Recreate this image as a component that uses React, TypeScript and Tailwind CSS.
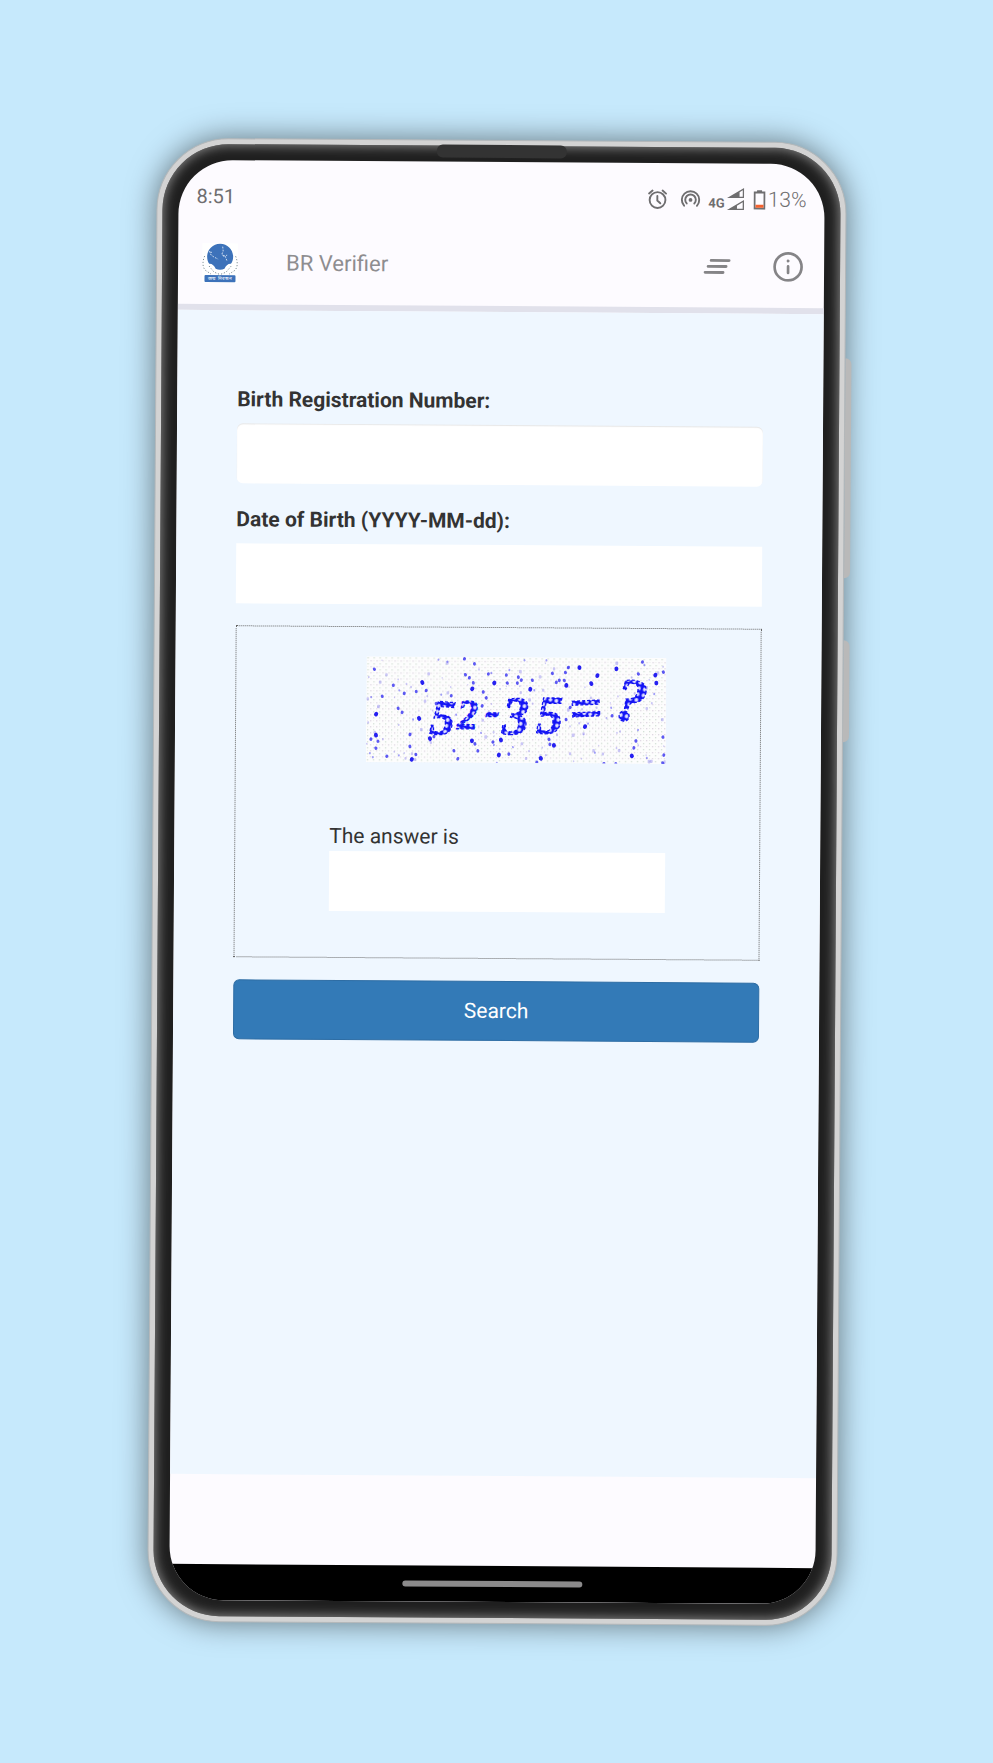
import React from "react";

type Speck = [number, number, number];

// x, y and size of the heavier ink spots on the challenge image
const inkSpots: Speck[] = [
  [8, 13, 3], [27, 29, 3], [33, 34, 2], [38, 37, 3], [50, 35, 3], [56, 26, 4], [60, 34, 3], [16, 40, 3],
  [10, 58, 4], [5, 41, 2], [32, 52, 3], [36, 56, 3], [47, 63, 2], [53, 62, 4], [44, 78, 3], [10, 79, 4],
  [5, 83, 3], [12, 85, 3], [10, 92, 3], [4, 97, 2], [7, 101, 2], [21, 100, 3], [33, 99, 2], [44, 90, 3],
  [46, 103, 4], [50, 98, 3], [64, 82, 4], [68, 80, 3], [88, 94, 3], [92, 102, 3], [106, 84, 4], [109, 87, 3],
  [112, 94, 3], [115, 76, 2], [127, 85, 3], [128, 88, 2], [135, 83, 4], [133, 98, 4], [143, 97, 3], [147, 90, 2],
  [72, 3, 2], [81, 5, 2], [98, 2, 3], [108, 7, 3], [99, 18, 3], [103, 21, 3], [107, 26, 3], [106, 32, 4],
  [122, 17, 3], [125, 16, 2], [128, 26, 4], [140, 18, 3], [141, 26, 3], [143, 13, 2], [152, 20, 3], [155, 23, 3],
  [151, 26, 3], [166, 23, 3], [164, 32, 4], [168, 33, 2], [158, 3, 2], [180, 3, 2], [186, 16, 3], [190, 25, 3],
  [193, 23, 3], [198, 23, 3], [200, 28, 4], [199, 15, 3], [202, 10, 3], [213, 10, 4], [225, 26, 4], [231, 18, 4],
  [250, 11, 4], [272, 16, 3], [276, 4, 3], [278, 7, 2], [289, 17, 4], [290, 25, 4], [297, 14, 3], [288, 36, 2],
  [200, 62, 3], [219, 69, 4], [222, 66, 2], [183, 82, 3], [184, 87, 3], [188, 88, 4], [175, 101, 4], [171, 105, 3],
  [229, 95, 2], [238, 106, 3], [250, 106, 3], [266, 98, 4], [268, 90, 3], [270, 83, 3], [272, 72, 2], [246, 58, 3],
  [297, 79, 3], [298, 97, 3], [281, 100, 2], [297, 105, 3], [117, 35, 3], [120, 41, 3], [116, 49, 3], [85, 39, 3],
  [70, 47, 3], [75, 38, 2], [90, 58, 2], [204, 50, 3], [131, 106, 2], [245, 50, 2],
];

function faintSpots(count: number): Speck[] {
  let seed = 52;
  const next = () => {
    seed = (seed * 16807) % 2147483647;
    return seed / 2147483647;
  };
  return Array.from({ length: count }, () => [next() * 298, next() * 103, 1 + next() * 2]);
}

function Captcha() {
  return (
    <svg viewBox="0 0 300 106" className="w-[300px] max-w-full self-end" role="img" aria-label="52-35=?">
      <defs>
        <pattern id="weave" width="6" height="6" patternUnits="userSpaceOnUse">
          <rect width="6" height="6" fill="#fdfdfd" />
          <rect x="1" y="1" width="1.3" height="1.3" fill="#d3e0d6" />
          <rect x="4" y="4" width="1.3" height="1.3" fill="#dfd6e2" />
          <rect x="1" y="4" width="1" height="1" fill="#ececea" />
        </pattern>
        <pattern id="rings" width="6" height="6" patternUnits="userSpaceOnUse" patternTransform="rotate(12)">
          <rect width="6" height="6" fill="#1414f5" />
          <circle cx="3" cy="3" r="1.900" fill="#e4e4ff" />
        </pattern>
        <clipPath id="edge">
          <rect width="300" height="106" />
        </clipPath>
      </defs>
      <rect width="300" height="106" fill="url(#weave)" />
      <g clipPath="url(#edge)">
        {faintSpots(110).map(([x, y, s], i) => (
          <rect key={i} x={x} y={y} width={s} height={s + 0.6} rx="0.8" fill="#8f86ee" opacity="0.45" />
        ))}
        {inkSpots.map(([x, y, s], i) => (
          <ellipse
            key={i}
            cx={x}
            cy={y}
            rx={s * 0.5}
            ry={s * 0.6}
            fill="#1a14f0"
            opacity={s === 4 ? 0.95 : s === 3 ? 0.7 : 0.4}
            transform={`rotate(${((i * 37) % 60) - 30} ${x} ${y})`}
          />
        ))}
        <text
          fontFamily="'Liberation Serif', serif"
          fontWeight="700"
          fontStyle="italic"
          fill="url(#rings)"
          stroke="#1414f2"
          strokeWidth="1.300"
          strokeDasharray="3 2"
        >
          <tspan x="63" y="77" fontSize="50" rotate="4">5</tspan>
          <tspan x="91" y="72" fontSize="42">2</tspan>
          <tspan x="119" y="68" fontSize="44">-</tspan>
          <tspan x="136" y="77" fontSize="54">3</tspan>
          <tspan x="170" y="76" fontSize="54">5</tspan>
          <tspan x="204" y="71" fontSize="58" rotate="-3">=</tspan>
          <tspan x="247" y="61" fontSize="62" rotate="8">?</tspan>
        </text>
      </g>
    </svg>
  );
}

function Logo() {
  return (
    <svg viewBox="0 0 36 40" className="h-10 w-9 shrink-0" role="img" aria-label="BR Verifier">
      <rect width="36" height="40" fill="#fff" />
      <path
        d="M18 0.5C25.5 0.5 31 6.5 31 13.5C31 16.5 30.2 19 28.8 20.6C26 20.4 23.6 22.5 22.4 25.6C19.6 27 16.4 27 13.6 25.6C12.4 22.5 10 20.4 7.2 20.6C5.8 19 5 16.5 5 13.5C5 6.500 10.500 0.500 18 0.500Z"
        fill="#3d72ba"
      />
      <g fill="none" stroke="#dbe7f5" strokeWidth="0.9" strokeDasharray="1.8 1.2">
        <path d="M7 8L9 12L12 14L16 16" />
        <path d="M20.500 3.500L21 8L19.500 11.500L23 13L25 18" />
        <path d="M8 9L11 9.500" />
        <path d="M21 13L25 12" />
      </g>
      <g fill="none" stroke="#5d6f78" strokeWidth="0.8" strokeDasharray="1.2 1.8">
        <path d="M2.500 13C0.500 18 0 23 3 27L9 31" />
        <path d="M33.500 13C35.500 18 36 23 33 27L27 31" />
        <path d="M7 23L12 29L17 31" />
        <path d="M29 23L24 29L19 31" />
      </g>
      <rect x="2.500" y="32" width="31" height="7" rx="1" fill="#3d72ba" />
      <text
        x="18"
        y="37.200"
        textAnchor="middle"
        fontSize="4.500"
        fontWeight="700"
        fontFamily="'Noto Sans', sans-serif"
        fill="#e6eef8"
      >
        জন্ম নিবন্ধন
      </text>
    </svg>
  );
}

function AlarmIcon() {
  return (
    <svg viewBox="0 0 20 20" className="h-5 w-5" fill="none" stroke="#6f6e70" strokeWidth="1.900" strokeLinecap="round">
      <circle cx="10" cy="11" r="7.900" />
      <path d="M1.500 4.500L5 1.500M18.500 4.500L15 1.500M9.800 7V11.500L12.800 14.200" />
    </svg>
  );
}

function HotspotIcon() {
  return (
    <svg viewBox="0 0 20 20" className="h-5 w-5" fill="none" stroke="#6f6e70" strokeWidth="1.900" strokeLinecap="round">
      <path d="M3.600 16.500A8.700 8.700 0 1 1 16.400 16.500" />
      <path d="M6.200 14.200A5.300 5.300 0 1 1 13.800 14.200" />
      <circle cx="10" cy="10.700" r="1.900" fill="#6f6e70" stroke="none" />
    </svg>
  );
}

function SignalIcon() {
  return (
    <svg viewBox="0 0 18 23" className="h-[23px] w-[18px]" fill="#6f6e70">
      <path d="M0.500 10.500L17.500 0.500V10.500ZM13 4.700V9.200H16.200V2.700Z" fillRule="evenodd" />
      <path d="M0.500 22.500L17.500 12.500V22.500ZM10.500 18.100V21.200H16.200V14.700Z" fillRule="evenodd" />
    </svg>
  );
}

function BatteryIcon() {
  return (
    <svg viewBox="0 0 12 20" className="h-5 w-3">
      <rect x="3.500" y="0.500" width="5" height="2" fill="#6f6e70" />
      <rect x="1" y="2.700" width="10" height="16.200" fill="none" stroke="#6f6e70" strokeWidth="2" />
      <rect x="2" y="15" width="8" height="3" fill="#f4622f" />
    </svg>
  );
}

function StatusBar() {
  return (
    <div className="flex h-[72px] items-center justify-between pr-[18px] pb-px pl-[18px] text-[20px] leading-6 text-[#6f6e70]">
      <span>8:51</span>
      <div className="flex items-center">
        <AlarmIcon />
        <span className="ml-[13px]">
          <HotspotIcon />
        </span>
        <span className="ml-2 self-end text-[13px] leading-4 font-bold">4G</span>
        <span className="ml-[2px]">
          <SignalIcon />
        </span>
        <span className="ml-[9px]">
          <BatteryIcon />
        </span>
        <span className="ml-[2px] text-[21px] font-light">13%</span>
      </div>
    </div>
  );
}

function AppBar() {
  return (
    <header className="flex h-[78px] items-center border-b-[6px] border-[#e1e1eb] pr-[21px] pb-[10px] pl-6">
      <Logo />
      <h1 className="ml-12 flex-1 text-[22px] leading-7 text-[#8e8d90]">BR Verifier</h1>
      <button type="button" aria-label="Menu" className="mr-[42px]">
        <svg viewBox="0 0 28 18" className="h-[18px] w-7" stroke="#858487" strokeWidth="2.800" strokeLinecap="round">
          <path d="M8 3H26M5 9H23M2 15H20" />
        </svg>
      </button>
      <button type="button" aria-label="About">
        <svg viewBox="0 0 30 30" className="h-[30px] w-[30px]" fill="none" stroke="#858487" strokeWidth="2.700" strokeLinecap="round">
          <circle cx="15" cy="15" r="13.500" />
          <path d="M15 14.500V21" />
          <path d="M15 9V9.100" strokeWidth="3" />
        </svg>
      </button>
    </header>
  );
}

function SearchForm() {
  return (
    <form
      className="flex-1 bg-[#eff7ff] px-[60px] pt-[75px] pb-[435px] text-[21px] leading-7 text-[#333]"
      onSubmit={(e) => e.preventDefault()}
    >
      <label htmlFor="number" className="block font-bold">
        Birth Registration Number:
      </label>
      <input
        id="number"
        type="text"
        className="mt-[10px] block h-[60px] w-full rounded-md bg-white px-4 shadow-[inset_0_1px_1px_#0000001a] outline-none"
      />
      <label htmlFor="birth" className="mt-[22px] block font-bold">
        Date of Birth (YYYY-MM-dd):
      </label>
      <input id="birth" type="text" className="mt-[10px] block h-[60px] w-full bg-white px-4 outline-none" />
      <div className="mt-[22px] flex justify-center border border-dotted border-[#666] pt-[29px] pb-[46px]">
        <div className="flex w-[336px] flex-col">
          <Captcha />
          <label htmlFor="answer" className="mt-[60px]">
            The answer is
          </label>
          <input id="answer" type="text" className="mt-px h-[60px] w-full bg-white px-4 outline-none" />
        </div>
      </div>
      <button
        type="submit"
        className="mt-[22px] h-[60px] w-full rounded-md border border-[#2e6da4] bg-[#337ab7] text-white"
      >
        Search
      </button>
    </form>
  );
}

export default function App() {
  return (
    <main className="flex min-h-screen items-center justify-center bg-[#c6e9fc] py-10 font-['Roboto',sans-serif]">
      <div className="relative w-full max-w-[690px] rotate-[0.38deg]">
        <div className="relative rounded-[72px] border border-[#b4b8ba] bg-[#d3d3d3] p-[5px] shadow-[0_0_30px_#00000080]">
          <div className="rounded-[66px] bg-[#1f1f1f] p-4 shadow-[inset_0_0_12px_1px_#8a8a8a]">
            <div className="flex flex-col overflow-hidden rounded-[54px] bg-[#fdfbff]">
              <StatusBar />
              <AppBar />
              <SearchForm />
              <div className="h-[90px]" />
              <div className="flex h-9 items-center justify-center bg-black">
                <div className="h-[6px] w-[180px] rounded-full bg-[#8b8a8b]" />
              </div>
            </div>
          </div>
          <div className="absolute top-[4px] left-1/2 h-[13px] w-[130px] -translate-x-1/2 rounded-md bg-[#333]" />
        </div>
        <div className="absolute top-[216px] -right-[6px] h-[220px] w-[6px] rounded-r-md bg-[#b9b9b9]" />
        <div className="absolute top-[498px] -right-[6px] h-[102px] w-[6px] rounded-r-md bg-[#b9b9b9]" />
      </div>
    </main>
  );
}
